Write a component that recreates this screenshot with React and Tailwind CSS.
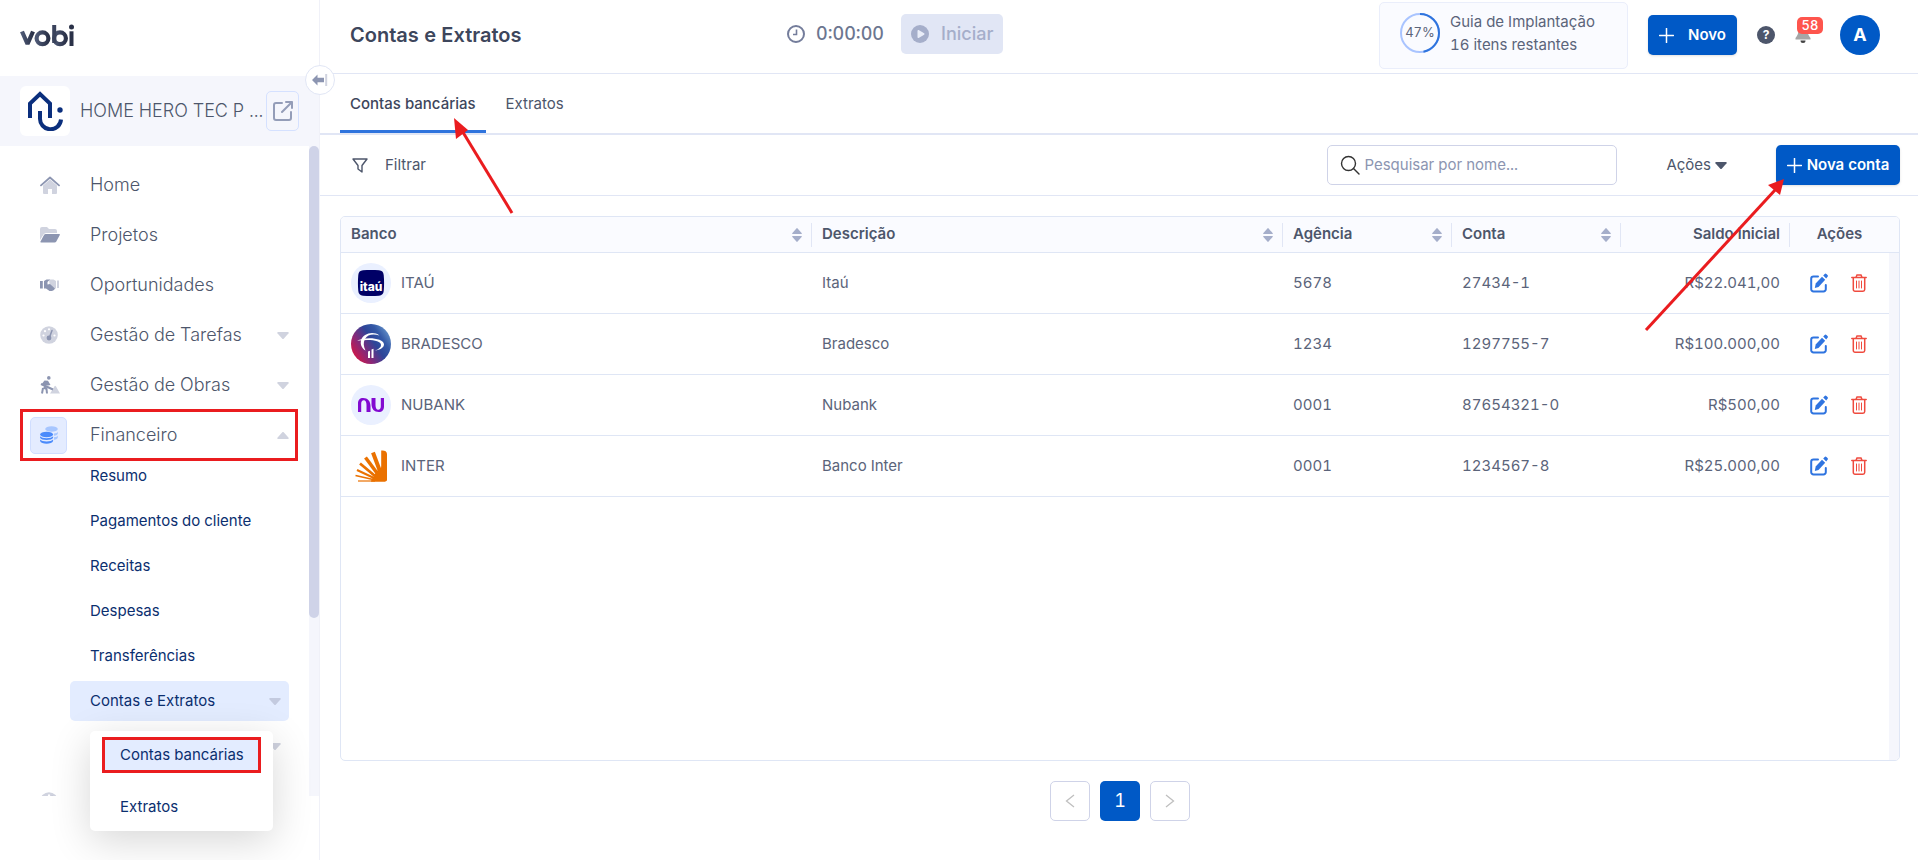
import React from 'react';
import { FaPlay } from 'react-icons/fa';

const HomeIcon = () => (
  <svg width="20" height="18" viewBox="0 0 20 18">
    <path d="M10 3.600 3 9.600V17a1 1 0 0 0 1 1h4v-5h4v5h4a1 1 0 0 0 1-1V9.600z" fill="#d0d3df" />
    <path d="M1 9.400 10 1.500l9 7.900" fill="none" stroke="#8c95b1" strokeWidth="1.800" strokeLinecap="round" strokeLinejoin="round" />
  </svg>
);

const FolderIcon = () => (
  <svg width="20" height="16" viewBox="0 0 20 16">
    <path d="M0 13V2a2 2 0 0 1 2-2h5l2 2h6a2 2 0 0 1 2 2v2H6a3 3 0 0 0-2.500 1.500z" fill="#d0d3df" />
    <path d="M0.500 14.500 4 8a2 2 0 0 1 1.700-1h13.500a.7.7 0 0 1 .6 1l-3.500 6.500a2 2 0 0 1-1.700 1H1a.7.7 0 0 1-.5-1z" fill="#8c95b1" />
  </svg>
);

const HandshakeIcon = () => (
  <svg width="20" height="12" viewBox="0 0 20 12">
    <path d="M17 1.500h2v7.500h-2zM9 .5h4.500L16 2v7.500h-1.500L9.500 5z" fill="#d0d3df" />
    <path d="M0 2h2.800v7.500H0zM4 2l2.500-1.500H10L7.500 3v2.500L10 5l5 4.500-1 1.500-2 1H9.500L6 9.500H4z" fill="#8c95b1" />
  </svg>
);

const GaugeIcon = () => (
  <svg width="18" height="18" viewBox="0 0 18 18">
    <circle cx="9" cy="9" r="8.800" fill="#d0d3df" />
    <g fill="#fff">
      <circle cx="3.500" cy="9.500" r="1.100" />
      <circle cx="5" cy="5.200" r="1.100" />
      <circle cx="9" cy="3.300" r="1.100" />
      <circle cx="14.500" cy="9.500" r="1.100" />
    </g>
    <path d="M12 4.500 9.600 11" stroke="#8c95b1" strokeWidth="1.500" strokeLinecap="round" />
    <circle cx="9" cy="12" r="2.400" fill="#8c95b1" />
  </svg>
);

const DiggingIcon = () => (
  <svg width="20" height="18" viewBox="0 0 20 18">
    <path d="M10 17.500 13 13l1.500-2.800a.8.8 0 0 1 1.400 0L20 17.500z" fill="#d0d3df" />
    <circle cx="8.800" cy="1.900" r="1.800" fill="#8c95b1" />
    <path d="M1 9 4.500 4.500 8 4.800 10.500 9 8 9.500z" fill="#8c95b1" />
    <path d="M2 17.500 3 12M3.500 11.500 6.500 13l.5 4.500M1 8l12 5.500" fill="none" stroke="#8c95b1" strokeWidth="2" />
  </svg>
);

const CoinsIcon = () => (
  <svg width="18" height="18" viewBox="0 0 18 18">
    <g fill="#a7c6ff">
      <ellipse cx="11.500" cy="3" rx="6.300" ry="2.800" />
      <path d="M14 7.500c2 0 3.800-.8 3.800-2v2c0 1.200-1.500 2-3.800 2.300zM14 11.300c2 0 3.800-.8 3.800-2v2.200c0 1.200-1.500 2-3.800 2.300z" />
    </g>
    <g fill="#4b8bfb">
      <ellipse cx="6.600" cy="8.500" rx="6.500" ry="2.800" />
      <path d="M.1 10.300c1.500 2.600 11.500 2.600 13 0v1.400c-1 3-12 3-13 0zM.1 13.600c1.500 2.600 11.500 2.600 13 0V15c-1 3.700-12 3.700-13 0z" />
    </g>
  </svg>
);

const Caret = ({ up, className = 'text-[#d0d3df]' }) => (
  <svg width="12" height="7" viewBox="0 0 12 7" className={className}>
    {up ? (
      <path d="M1 7h10a.8.8 0 0 0 .6-1.300L6.700.3a1 1 0 0 0-1.400 0L.4 5.700A.8.8 0 0 0 1 7z" fill="currentColor" />
    ) : (
      <path d="M1 0h10a.8.8 0 0 1 .6 1.300L6.700 6.700a1 1 0 0 1-1.400 0L.4 1.300A.8.8 0 0 1 1 0z" fill="currentColor" />
    )}
  </svg>
);

const SortIcon = () => (
  <svg width="10" height="14" viewBox="0 0 10 14" fill="#a5aeca">
    <path d="M.8 6h8.400a.5.500 0 0 0 .4-.9L5.600.4a.8.8 0 0 0-1.200 0L.4 5.100A.5.500 0 0 0 .8 6zM.8 8h8.400a.5.500 0 0 1 .4.9L5.600 13.600a.8.8 0 0 1-1.200 0L.4 8.900A.5.500 0 0 1 .8 8z" />
  </svg>
);

const PlusIcon = () => (
  <svg width="15" height="15" viewBox="0 0 15 15">
    <path d="M7.500 0.500v14M0.500 7.500h14" stroke="#fff" strokeWidth="1.500" strokeLinecap="round" />
  </svg>
);

const EditIcon = () => (
  <svg width="18" height="20" viewBox="0 0 18 20">
    <path d="M8 3.500H3.500a2.300 2.300 0 0 0-2.300 2.300v10.400a2.300 2.300 0 0 0 2.300 2.300h10a2.300 2.300 0 0 0 2.300-2.300v-4.200" fill="none" stroke="#2f74e0" strokeWidth="2" strokeLinecap="round" />
    <path d="m4.800 14.900.9-4.300L12 3.800l3.200 3-6.700 7.200z" fill="#2f74e0" />
    <path d="M13.200 2.600 14.700 1a1.200 1.200 0 0 1 1.700 0l1.100 1.100a1.200 1.200 0 0 1 0 1.700l-1.300 1.700z" fill="#2f74e0" />
  </svg>
);

const TrashIcon = () => (
  <svg width="16" height="18" viewBox="0 0 16 18" fill="none" stroke="#ef4b3f" strokeLinecap="round">
    <path d="M.8 3.500h14.400M5 3.300 6 1h4l1 2.300M2.300 4v11.500A1.700 1.700 0 0 0 4 17.200h8a1.700 1.700 0 0 0 1.700-1.700V4" strokeWidth="1.500" />
    <path d="M5.500 7v7M8 7v7M10.500 7v7" strokeWidth="1" />
  </svg>
);

const ItauLogo = () => (
  <svg width="40" height="40" viewBox="0 0 40 40">
    <circle cx="20" cy="20" r="20" fill="#eaf0ff" />
    <path d="M12 7.300c5-.5 11-.5 16 0 3 .3 4.400 1.700 4.700 4.700.5 5 .5 11 0 16-.3 3-1.700 4.400-4.700 4.700-5 .5-11 .5-16 0-3-.3-4.400-1.700-4.700-4.700-.5-5-.5-11 0-16 .3-3 1.700-4.400 4.700-4.700z" fill="#000066" />
    <text x="20" y="27.500" textAnchor="middle" fontFamily="Inter, sans-serif" fontWeight="800" fontSize="12" fill="#fff">itaú</text>
  </svg>
);

const BradescoLogo = () => (
  <svg width="40" height="40" viewBox="0 0 40 40">
    <defs>
      <linearGradient id="bradesco" x1="0.050" y1="0.800" x2="0.950" y2="0.200">
        <stop offset="0" stopColor="#d31647" />
        <stop offset="0.300" stopColor="#83297a" />
        <stop offset="0.580" stopColor="#2d4598" />
        <stop offset="0.780" stopColor="#3358a6" />
        <stop offset="1" stopColor="#6390c8" />
      </linearGradient>
    </defs>
    <circle cx="20" cy="20" r="20" fill="url(#bradesco)" />
    <path d="M28.500 11.500C22 6.500 12 9.500 10 16.500c-1 4 1 8 4.500 10-2-4-2.500-8-.5-11.500 2.500-4.500 8-5.500 14.500-3.500z" fill="#fff" />
    <path d="M6 16.800c8-4.500 27-3 27 3.700 0 3-4 5.500-9 6 4-1.300 6-3.200 6-5.500 0-5-12-6-24-4.200z" fill="#fff" />
    <path d="M17 27.500l2-.8V34h-2zM20.500 25.500l2-.8V34h-2z" fill="#fff" />
  </svg>
);

const NubankLogo = () => (
  <svg width="40" height="40" viewBox="0 0 40 40">
    <circle cx="20" cy="20" r="20" fill="#eaf0ff" />
    <g fill="#820ad1">
      <path d="M7 27V18.500c0-3.500 1.800-5.500 5.200-5.500 4.500 0 7.300 3 7.300 8v6h-4v-7c0-3-1-4.800-2.700-4.800-1.700 0-2.600 1.300-2.600 3.500V27z" />
      <path d="M33 13v8.500c0 3.500-1.800 5.500-5.200 5.500-4.500 0-7.300-3-7.300-8v-6h4v7c0 3 1 4.800 2.700 4.800 1.700 0 2.600-1.300 2.600-3.500V13z" />
    </g>
  </svg>
);

const InterLogo = () => (
  <svg width="40" height="40" viewBox="0 0 40 40">
    <path d="M36 8v25.500a2 2 0 0 1-2 2H20c1-3 3-5 5-6.500 3-2 5-4 5.200-9V4.500C33 4 36 5 36 8z" fill="#ea7100" />
    <g stroke="#ea7100" fill="none">
      <path d="M22 6.500 28.500 24" strokeWidth="4" />
      <path d="M14.500 11.500 26 27" strokeWidth="3.500" />
      <path d="M9 17.500 24 30" strokeWidth="2.800" />
      <path d="M6 24 23 32" strokeWidth="2.200" />
      <path d="M4.500 29.500 22 33.500" strokeWidth="1.700" />
      <path d="M7 35H24" strokeWidth="1.200" />
    </g>
    <path d="M20 35.500 25 26l4-4h7v12l-2 1.500z" fill="#ea7100" />
  </svg>
);

const menu = [
  { label: 'Home', icon: HomeIcon },
  { label: 'Projetos', icon: FolderIcon },
  { label: 'Oportunidades', icon: HandshakeIcon },
  { label: 'Gestão de Tarefas', icon: GaugeIcon, expandable: true },
  { label: 'Gestão de Obras', icon: DiggingIcon, expandable: true },
];

const submenu = ['Resumo', 'Pagamentos do cliente', 'Receitas', 'Despesas', 'Transferências'];

const accounts = [
  { bank: 'ITAÚ', logo: ItauLogo, description: 'Itaú', agency: '5678', number: '27434-1', balance: 'R$22.041,00' },
  { bank: 'BRADESCO', logo: BradescoLogo, description: 'Bradesco', agency: '1234', number: '1297755-7', balance: 'R$100.000,00' },
  { bank: 'NUBANK', logo: NubankLogo, description: 'Nubank', agency: '0001', number: '87654321-0', balance: 'R$500,00' },
  { bank: 'INTER', logo: InterLogo, description: 'Banco Inter', agency: '0001', number: '1234567-8', balance: 'R$25.000,00' },
];

const Sidebar = () => (
  <aside className="relative flex w-[320px] shrink-0 flex-col border-r border-[#f0f1f8]">
    <div className="flex h-[76px] shrink-0 items-center pl-5">
      <svg width="56" height="32" viewBox="0 0 56 32">
        <defs>
          <linearGradient id="vobi" x1="0" x2="1">
            <stop offset="0" stopColor="#4d5874" />
            <stop offset="1" stopColor="#2a3148" />
          </linearGradient>
        </defs>
        <g fill="none" stroke="url(#vobi)" strokeWidth="4.200">
          <path d="M2 9.500 7.500 22 13 9.500" strokeLinejoin="bevel" />
          <circle cx="22.500" cy="16.300" r="5.900" />
          <circle cx="40" cy="16.300" r="5.900" />
        </g>
        <path d="M32.200 3h4v18h-4z" fill="#3a435c" />
        <path d="M49.500 9.300h4V24h-4z" fill="#2a3148" />
        <circle cx="51.500" cy="5" r="2.500" fill="#2a3148" />
      </svg>
    </div>

    <div className="flex h-[70px] shrink-0 items-center bg-[#f5f6fc] pl-5">
      <div className="flex size-[50px] items-center justify-center rounded-md bg-white">
        <svg width="36" height="40" viewBox="0 0 36 40" fill="none" stroke="#0b2f7d" strokeWidth="4">
          <path d="M3 27V12.500L13 3l10 9.500V27" />
          <path d="M13 20v7a10.500 10.500 0 0 0 21 1.500" />
          <circle cx="33" cy="19" r="2.700" fill="#0b2f7d" stroke="none" />
        </svg>
      </div>
      <span className="ml-[10px] w-[186px] whitespace-nowrap text-lg font-light text-[#4d566b]">HOME HERO TEC P ...</span>
      <button aria-label="Abrir empresa" className="flex h-10 w-[33px] items-center justify-center rounded-[5px] border border-[#d5e1ff]">
        <svg width="20" height="20" viewBox="0 0 20 20" fill="none" stroke="#949db8" strokeWidth="2" strokeLinecap="round" strokeLinejoin="round">
          <path d="M9 2H3a2 2 0 0 0-2 2v13a2 2 0 0 0 2 2h13a2 2 0 0 0 2-2v-6M13 1h6v6M19 1 9 11" />
        </svg>
      </button>
    </div>

    <button aria-label="Recolher menu" className="absolute top-[65px] -right-4 flex size-[30px] items-center justify-center rounded-full border border-[#e1e6f5] bg-white">
      <svg width="16" height="12" viewBox="0 0 16 12">
        <path d="M0 6 5.500.5v3.300H12v4.400H5.500v3.300z" fill="#8c95b1" />
        <path d="M14.200 0v12" stroke="#d0d3df" strokeWidth="2" />
      </svg>
    </button>

    <div className="flex h-[650px] overflow-hidden">
      <nav className="flex-1 pt-[19px]">
        <ul className="flex flex-col gap-[10px]">
          {menu.map(({ label, icon: Icon, expandable }) => (
            <li key={label}>
              <a href="#" className="flex h-10 items-center pr-5 pl-10 text-lg font-light text-[#4d566b]">
                <span className="w-[50px]"><Icon /></span>
                <span className="flex-1">{label}</span>
                {expandable && <Caret />}
              </a>
            </li>
          ))}
          <li>
            <a href="#" className="flex h-10 items-center pr-5 pl-[30px] text-lg font-light text-[#4d566b]">
              <span className="mr-[23px] flex size-[37px] items-center justify-center rounded-[5px] border border-[#d0deff] bg-[#e4ecff]">
                <CoinsIcon />
              </span>
              <span className="flex-1">Financeiro</span>
              <Caret up />
            </a>
          </li>
        </ul>
        <ul className="mt-px flex flex-col gap-[5px] pr-5 pl-[70px] text-[15px] text-[#0b2f6f]">
          {submenu.map((label) => (
            <li key={label}>
              <a href="#" className="flex h-10 items-center pl-5">{label}</a>
            </li>
          ))}
          <li>
            <a href="#" className="flex h-10 items-center justify-between rounded-[5px] bg-[#e3ecff] pr-2 pl-5">
              Contas e Extratos
              <Caret className="text-[#c3cadf]" />
            </a>
          </li>
          <li className="flex h-10 items-center justify-end pr-2"><Caret /></li>
        </ul>
        <div className="mt-[15px] flex h-10 items-center pl-10"><GaugeIcon /></div>
      </nav>
      <div className="w-[10px] bg-[#f5f6fc]">
        <div className="h-[472px] rounded-full bg-[#cfd3e8]" />
      </div>
    </div>

    <div className="absolute top-[731px] left-[90px] flex h-[100px] w-[183px] flex-col gap-4 rounded-[5px] bg-white px-3 pt-[6px] text-[15px] text-[#0b2f6f] shadow-[0_10px_40px_rgba(0,0,0,0.16)]">
      <a href="#" className="flex h-9 items-center border-[3px] border-[#ea1c1f] bg-[#e3ecff] pl-[15px]">Contas bancárias</a>
      <a href="#" className="flex h-9 items-center pl-[18px]">Extratos</a>
    </div>

    <div className="pointer-events-none absolute top-[409px] left-5 h-[52px] w-[278px] border-[3px] border-[#ea1c1f]" />
  </aside>
);

const Header = () => (
  <header className="flex h-[74px] shrink-0 items-center justify-between border-b border-[#e1e6f5] pr-[38px] pb-[3px] pl-[30px]">
    <h1 className="w-[437px] text-xl font-semibold text-[#3d465c]">Contas e Extratos</h1>
    <div className="flex flex-1 items-center pb-[2px]">
      <svg width="18" height="18" viewBox="0 0 18 18" fill="none" stroke="#747d9b" strokeWidth="2">
        <circle cx="9" cy="9" r="8" />
        <path d="M9.500 4.500V9.500H6" strokeWidth="1.600" />
      </svg>
      <span className="ml-[11px] w-[85px] text-lg font-medium text-[#6c7690]">0:00:00</span>
      <button className="flex h-10 items-center gap-3 rounded-[5px] bg-[#e1e6f5] px-[10px] text-lg font-medium text-[#a5aeca]">
        <span className="flex size-[18px] items-center justify-center rounded-full bg-[#a5aeca]">
          <FaPlay size={8} className="ml-px text-[#e9edf8]" />
        </span>
        Iniciar
      </button>
    </div>

    <div className="flex items-center">
      <div className="mr-5 flex h-[67px] w-[249px] items-center gap-[10px] rounded-[5px] border border-[#eaeefb] bg-[#fafbff] pb-1 pl-5">
        <svg width="40" height="40" viewBox="0 0 40 40" fill="none" strokeWidth="2">
          <circle cx="20" cy="20" r="19" stroke="#a9c4ff" />
          <circle cx="20" cy="20" r="19" stroke="#2f74dd" pathLength="100" strokeDasharray="47 53" transform="rotate(-90 20 20)" />
          <text x="20" y="24" textAnchor="middle" fontFamily="Inter, sans-serif" fontSize="13" fill="#5b647a" stroke="none">47%</text>
        </svg>
        <div className="text-[15px] leading-[23px] text-[#5b647a]">
          <p>Guia de Implantação</p>
          <p>16 itens restantes</p>
        </div>
      </div>
      <button className="flex h-10 w-[89px] items-center justify-between rounded-[5px] bg-[#0059c6] px-[11px] text-[15px] font-semibold text-white shadow-sm">
        <PlusIcon />
        Novo
      </button>
      <button aria-label="Ajuda" className="ml-5 flex size-[18px] items-center justify-center rounded-full bg-[#4d566b] text-xs font-bold text-white">?</button>
      <button aria-label="Notificações" className="relative ml-5 h-10 w-7">
        <svg width="16" height="20" viewBox="0 0 16 20" className="absolute top-[9px] left-0">
          <path d="M8 0C4.500 1 3.500 3 3.500 6.500 3.500 10 2 12 .5 14v1.500h15V14C14 12 12.500 10 12.500 6.500 12.500 3 11.500 1 8 0z" fill="#a6a6a6" />
          <path d="M5.500 16.500h5a2.500 2.500 0 0 1-5 0z" fill="#444" />
        </svg>
        <span className="absolute top-[2px] left-[2px] flex h-[17px] w-[26px] items-center justify-center rounded-[5px] bg-[#fe554d] text-[13px] font-medium text-white">58</span>
      </button>
      <button aria-label="Conta" className="ml-[17px] size-10 rounded-full bg-[#0059c6] text-lg font-bold text-white">A</button>
    </div>
  </header>
);

const HeaderCell = ({ children, divided = true }) => (
  <th className="h-9 border-b border-[#dfe6f5] p-0 text-left font-semibold">
    <div className={divided ? 'flex h-6 items-center justify-between border-r border-[#e1e6f5] pr-[9px] pl-[10px]' : 'text-center'}>
      {children}
    </div>
  </th>
);

const AccountsTable = () => (
  <div className="flex min-h-0 flex-1 overflow-hidden rounded-[5px] border border-[#dfe6f5]">
    <div className="min-w-0 flex-1">
      <table className="w-full table-fixed border-separate border-spacing-0 text-[15px] text-[#5b647a]">
        <colgroup>
          <col />
          <col />
          <col className="w-[169px]" />
          <col className="w-[169px]" />
          <col className="w-[169px]" />
          <col className="w-[99px]" />
        </colgroup>
        <thead className="bg-[#fafbff] text-[#4d566b]">
          <tr>
            <HeaderCell>Banco<SortIcon /></HeaderCell>
            <HeaderCell>Descrição<SortIcon /></HeaderCell>
            <HeaderCell>Agência<SortIcon /></HeaderCell>
            <HeaderCell>Conta<SortIcon /></HeaderCell>
            <HeaderCell><span className="flex-1 text-right">Saldo inicial</span></HeaderCell>
            <HeaderCell divided={false}>Ações</HeaderCell>
          </tr>
        </thead>
        <tbody>
          {accounts.map(({ bank, logo: Logo, description, agency, number, balance }) => (
            <tr key={bank} className="h-[61px] *:border-b *:border-[#dfe6f5] *:px-[10px] *:py-0">
              <td>
                <div className="flex items-center gap-[10px]">
                  <Logo />
                  {bank}
                </div>
              </td>
              <td>{description}</td>
              <td>{agency}</td>
              <td>{number}</td>
              <td className="text-right">{balance}</td>
              <td>
                <div className="flex items-center justify-between pr-3 pl-[10px]">
                  <button aria-label={`Editar ${bank}`}><EditIcon /></button>
                  <button aria-label={`Excluir ${bank}`}><TrashIcon /></button>
                </div>
              </td>
            </tr>
          ))}
        </tbody>
      </table>
    </div>
    <div className="flex w-[10px] flex-col bg-[#f5f6fc]">
      <div className="h-9 border-b border-[#dfe6f5] bg-[#fafbff]" />
    </div>
  </div>
);

const App = () => (
  <div className="relative flex h-screen bg-white font-['Inter',sans-serif] tabular-nums">
    <Sidebar />
    <div className="flex min-w-0 flex-1 flex-col">
      <Header />

      <nav className="flex h-[61px] shrink-0 gap-[10px] border-b-2 border-[#e1e6f5] pl-5 text-[15px]">
        <a href="#" className="flex items-center border-b-[3px] border-[#2f74dd] px-[10px] pt-1 font-medium text-[#3d465c]">Contas bancárias</a>
        <a href="#" className="flex items-center border-b-[3px] border-transparent px-[10px] pt-1 text-[#4d566b]">Extratos</a>
      </nav>

      <div className="flex h-[61px] shrink-0 items-center justify-between border-b border-[#e1e6f5] pr-[18px] pl-8 text-[15px] text-[#4d566b]">
        <button className="flex items-center gap-[17px]">
          <svg width="16" height="15" viewBox="0 0 16 15" fill="none" stroke="#4d566b" strokeWidth="1.400" strokeLinejoin="round">
            <path d="M1 1h14l-5 6.500V14l-4-3V7.500z" />
          </svg>
          Filtrar
        </button>
        <div className="flex items-center">
          <label className="flex h-10 w-[290px] items-center gap-1 rounded-[5px] border border-[#cfd3e8] px-3">
            <svg width="20" height="20" viewBox="0 0 20 20" fill="none" stroke="#333" strokeWidth="1.400" strokeLinecap="round">
              <circle cx="8.500" cy="8.500" r="7" />
              <path d="m13.500 13.500 5.500 5.500" />
            </svg>
            <input type="text" aria-label="Pesquisar" placeholder="Pesquisar por nome..." className="min-w-0 flex-1 outline-none placeholder:text-[#8c95b1]" />
          </label>
          <button className="ml-[49px] flex items-center gap-1">
            Ações
            <Caret className="text-[#4d566b]" />
          </button>
          <button className="ml-[49px] flex h-10 w-[124px] items-center justify-center gap-[5px] rounded-[5px] bg-[#0059c6] font-semibold whitespace-nowrap text-white shadow-sm">
            <PlusIcon />
            Nova conta
          </button>
        </div>
      </div>

      <main className="flex min-h-0 flex-1 flex-col pt-5 pr-[18px] pb-[39px] pl-5">
        <AccountsTable />
        <div className="mt-5 flex justify-center gap-[10px]">
          <button aria-label="Anterior" className="flex size-10 items-center justify-center rounded-[5px] border border-[#cfd3e8]">
            <svg width="10" height="14" viewBox="0 0 10 14" fill="none" stroke="#bfbfbf" strokeWidth="1.300"><path d="M9 1 1.500 7 9 13" /></svg>
          </button>
          <button className="size-10 rounded-[5px] bg-[#0059c6] text-lg text-white">1</button>
          <button aria-label="Próxima" className="flex size-10 items-center justify-center rounded-[5px] border border-[#cfd3e8]">
            <svg width="10" height="14" viewBox="0 0 10 14" fill="none" stroke="#bfbfbf" strokeWidth="1.300"><path d="m1 1 7.500 6L1 13" /></svg>
          </button>
        </div>
      </main>
    </div>

    {/* red pointer arrows */}
    <svg width="62" height="98" viewBox="0 0 62 98" className="pointer-events-none absolute top-[118px] left-[453px]" fill="#ea1c1f">
      <path d="M8 11 59 95" stroke="#ea1c1f" strokeWidth="3" />
      <path d="M1 0 15 12 3 21z" />
    </svg>
    <svg width="142" height="154" viewBox="0 0 142 154" className="pointer-events-none absolute top-[179px] right-[132px]" fill="#ea1c1f">
      <path d="M132 10 2 151" stroke="#ea1c1f" strokeWidth="3" />
      <path d="M140 0 136 16 124 6z" />
    </svg>
  </div>
);

export default App;
